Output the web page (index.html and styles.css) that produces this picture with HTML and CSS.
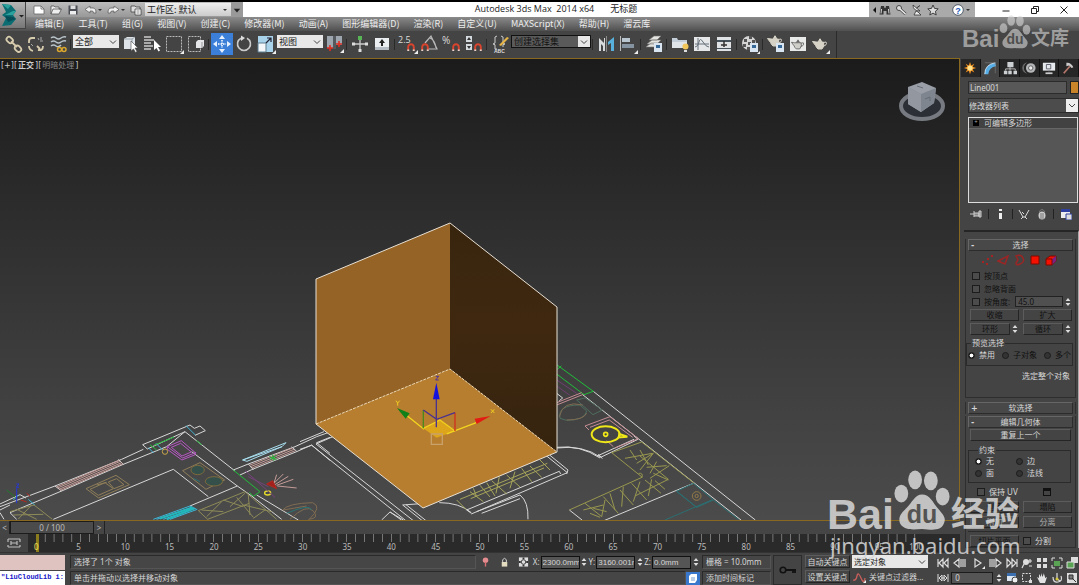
FILE: index.html
```html
<!DOCTYPE html>
<html lang="zh-CN">
<head>
<meta charset="utf-8">
<title>Autodesk 3ds Max 2014 x64 无标题</title>
<link rel="stylesheet" href="styles.css">
</head>
<body>
<svg class="defs" aria-hidden="true">
  <symbol id="chev" viewBox="0 0 8 8"><path d="M1 2.5l3 3 3-3" fill="none" stroke="#444" stroke-width="1"/></symbol>
  <symbol id="updown" viewBox="0 0 6 10"><path d="M3 1l2.4 3H.6zM3 9L.6 6h4.800z" fill="#ddd"/></symbol>
  <symbol id="magnet" viewBox="0 0 8 8"><path d="M1.200 7.500V4a2.800 2.800 0 0 1 5.600 0v3.500" fill="none" stroke="#d8442e" stroke-width="1.900"/><path d="M.3 6.500h1.900V8H.3zM5.800 6.500h1.900V8H5.800z" fill="#e8d8d0"/></symbol>
  <symbol id="corner" viewBox="0 0 4 4"><path d="M4 0v4H0z" fill="#eee"/></symbol>
  <symbol id="teapot" viewBox="0 0 16 12"><path d="M4 4h7.500q1.500 4-1.500 7H6Q4.500 10 3.500 7.500L.5 3.500 3 3.800z" /><path d="M6 3.300q2-1.800 4 0zM7.500 1h1v1.500h-1z"/><path d="M11.500 4.500q3.500-1.500 3 1t-3.500 2.700" fill="none" stroke-width="1"/></symbol>
  <symbol id="paw" viewBox="0 0 58 62"><ellipse cx="8" cy="24" rx="7" ry="9"/><ellipse cx="22" cy="10" rx="7" ry="9.500"/><ellipse cx="38" cy="11" rx="7" ry="9.500"/><ellipse cx="50" cy="27" rx="7" ry="9"/><path d="M29 25c8 0 11 8 16 14 6 7 9 10 6 16-3 7-11 6-22 5-11 1-18 1-22-5-3-7 1-11 6-16 6-6 9-14 16-14z"/></symbol>
</svg>

<header class="top">
  <button class="app" aria-label="应用程序"><svg viewBox="0 0 26 27" width="26" height="27"><path d="M2 2l9 1 5 6-3 4 3 4-5 6-9 1 4-8-4-3 4-3z" fill="#0b6d72"/><path d="M2 2l6 5 3-4zM5 13l8-4 3 0-3 4z" fill="#2ba29e"/><path d="M5 14l8 1 3 2-8 3z" fill="#064d58"/><path d="M19 13h5l-2.500 2.500z" fill="#222"/></svg></button>
  <div class="bars">
    <div class="title">
      <div class="quick">
        <button aria-label="新建"><svg viewBox="0 0 12 12"><path d="M1 2h7l3 3v5H1z" fill="#fff" stroke="#666" stroke-width=".8"/><path d="M8 2v3h3" fill="none" stroke="#666" stroke-width=".8"/></svg></button>
        <button aria-label="打开"><svg viewBox="0 0 12 12"><path d="M1 10V2h3l1 1h4v2h2.500L9 10z" fill="#eee" stroke="#555" stroke-width=".8"/><path d="M1 10l2-5h8" fill="none" stroke="#555" stroke-width=".8"/></svg></button>
        <button aria-label="保存"><svg viewBox="0 0 12 12"><path d="M1.500 1.500h9v9h-9z" fill="#4c4f55"/><path d="M3.500 1.500h5v3.500h-5z" fill="#ddd"/><path d="M3 7h6v3.500H3z" fill="#eee"/></svg></button>
        <button class="wide" aria-label="撤消"><svg viewBox="0 0 18 12"><path d="M1 5.500L6 2v2h3q3 0 3 5H9.500Q9.500 7 8 7H6v2z" fill="#eee" stroke="#555" stroke-width=".7"/><path d="M14 5h4l-2 2z" fill="#333"/></svg></button>
        <button class="wide" aria-label="重做"><svg viewBox="0 0 18 12"><path d="M12 5.500L7 2v2H4Q1 4 1 9h2.500Q3.500 7 5 7h2v2z" fill="#eee" stroke="#555" stroke-width=".7"/><path d="M14 5h4l-2 2z" fill="#333"/></svg></button>
        <button aria-label="项目文件夹"><svg viewBox="0 0 12 12"><path d="M1 2h4l1 1h4v5H1z" fill="#ddd" stroke="#444" stroke-width=".8"/><path d="M5 5h6v6H5z" fill="#fff" stroke="#444" stroke-width=".8"/><path d="M6.500 7h3M6.500 9h3" stroke="#555" stroke-width=".7"/></svg></button>
        <span class="combo work"><select aria-label="工作区"><option>工作区: 默认</option></select><svg viewBox="0 0 8 8"><path d="M2 3h4L4 5z" fill="#333"/></svg></span>
        <button class="more" aria-label="更多"><svg viewBox="0 0 10 12"><path d="M1 4.500h8L5 9z" fill="#222"/></svg></button>
      </div>
      <h1><span>Autodesk 3ds Max&nbsp; 2014 x64</span><span>无标题</span></h1>
      <div class="info">
        <svg class="tiny" viewBox="0 0 5 8"><path d="M4 1v6L1 4z" fill="#111"/></svg>
        <button aria-label="搜索"><svg viewBox="0 0 12 12"><path d="M2 2h3l.5 2h1L7 2h3l1.500 8.500h-4V7h-3v3.500h-4z" fill="#333"/><path d="M2.500 5L2 9.500M9.500 5l.5 4.500" stroke="#ddd"/></svg></button>
        <button aria-label="速博中心"><svg viewBox="0 0 12 12"><path d="M5 5l5.500 5" stroke="#444" stroke-width="3"/><circle cx="4" cy="4" r="2.500" fill="#ddd" stroke="#444"/><path d="M5 5l5.500 5" stroke="#eee" stroke-width="1.500"/></svg></button>
        <button aria-label="通讯中心"><svg viewBox="0 0 12 12"><path d="M2 1q0 6 7 6zM5 7l-2 4h7L7 8z" fill="#eee" stroke="#333" stroke-width=".8"/><path d="M5.500 4L9 1.500" stroke="#333"/></svg></button>
        <button aria-label="收藏夹"><svg viewBox="0 0 12 12"><path d="M6 1l1.500 3.400 3.700.4-2.800 2.500.8 3.700L6 9.100 2.800 11l.8-3.700L.8 4.800l3.700-.4z" fill="#ddd" stroke="#333" stroke-width=".9"/></svg></button>
        <button class="help" aria-label="帮助"><svg viewBox="0 0 20 12"><circle cx="8" cy="6" r="5.300" fill="#fff" stroke="#345" stroke-width=".8"/><text x="8" y="9.500" text-anchor="middle" font-size="9" font-weight="700" font-family="Liberation Sans" fill="#1d59b8">?</text><path d="M16 5h4l-2 2z" fill="#333"/></svg></button>
      </div>
      <div class="win">
        <button aria-label="最小化"><svg viewBox="0 0 10 10"><path d="M1.500 6h7" stroke="#222"/></svg></button>
        <button aria-label="还原"><svg viewBox="0 0 10 10"><path d="M1.500 3.500h5v5h-5zM3.500 3.500v-2h5v5h-2" fill="none" stroke="#222"/></svg></button>
        <button aria-label="关闭"><svg viewBox="0 0 10 10"><path d="M1.500 1.500l7 7M8.500 1.500l-7 7" stroke="#222"/></svg></button>
      </div>
    </div>
    <nav class="menu"><a href="#">编辑(E)</a><a href="#">工具(T)</a><a href="#">组(G)</a><a href="#">视图(V)</a><a href="#">创建(C)</a><a href="#">修改器(M)</a><a href="#">动画(A)</a><a href="#">图形编辑器(D)</a><a href="#">渲染(R)</a><a href="#">自定义(U)</a><a href="#">MAXScript(X)</a><a href="#">帮助(H)</a><a href="#">溜云库</a></nav>
  </div>
</header>

<div class="tools">
  <div class="toolbar">
    <button aria-label="选择并链接"><svg viewBox="0 0 20 20"><g fill="none" stroke="#d8ccae" stroke-width="1.800"><rect x="2" y="3" width="7" height="5" rx="2.500" transform="rotate(45 5 6)"/><rect x="11" y="12" width="7" height="5" rx="2.500" transform="rotate(45 14 14)"/><path d="M7 7.500l6 5.500"/></g></svg></button>
    <button aria-label="断开链接"><svg viewBox="0 0 20 20"><g fill="none" stroke="#d8ccae" stroke-width="1.800"><path d="M9 4H6Q3 4 3 7v2M3 12q0 4 4 5M12 16q5 1 5-4M11 12l3 3"/></g><path d="M12 4l1 2M15 3v3M17 7h-3M5 10l2 2" stroke="#aaa"/></svg></button>
    <button aria-label="绑定到空间扭曲"><svg viewBox="0 0 20 20"><path d="M3 4q2.500-2 5 0t5 0 5-1M3 8q2.500-2 5 0t5 0 5-1M3 12q2.500-2 5 0t5-1" fill="none" stroke="#b8c3ca" stroke-width="1.500"/><g fill="none" stroke="#dba72c" stroke-width="1.500"><circle cx="11.500" cy="15.500" r="2"/><circle cx="16" cy="15.500" r="2"/></g></svg></button>
    <i class="sep"></i>
    <span class="combo all"><select aria-label="选择过滤器"><option>全部</option></select><svg><use href="#chev"/></svg></span>
    <button aria-label="选择对象"><svg viewBox="0 0 20 20"><path d="M4 5l3-2h8v9l-3 3H4z" fill="#dde3e8"/><path d="M4 5h8v10M12 5l3-2" fill="none" stroke="#9aa4ac"/><path d="M11 7v10l2.500-2 2 3.500 1.500-1-2-3.500h3z" fill="#fff" stroke="#444" stroke-width=".6"/></svg></button>
    <button aria-label="按名称选择"><svg viewBox="0 0 20 20"><path d="M2 3h7M2 6h10M2 9h7M2 12h9M2 15h7" stroke="#ccc" stroke-width="1.300"/><path d="M12 6v10l2.500-2 2 3.500 1.500-1-2-3.500h3z" fill="#fff"/></svg></button>
    <button aria-label="矩形选择区域"><svg viewBox="0 0 20 20"><path d="M2.500 2.500h15v15h-15z" fill="none" stroke="#bbb" stroke-dasharray="2 1"/><use href="#corner" x="16" y="16" width="4" height="4"/></svg></button>
    <button aria-label="窗口/交叉"><svg viewBox="0 0 20 20"><path d="M2.500 2.500h12v15h-12z" fill="none" stroke="#bbb" stroke-dasharray="2 1"/><path d="M10 8l2-2h6v6l-2 2h-6z" fill="#e4e6e8"/><path d="M16 14V8" stroke="#999"/></svg></button>
    <i class="sep"></i>
    <button class="on" aria-label="选择并移动"><svg viewBox="0 0 20 20"><path d="M10 1l3 4H7zM10 19l3-4H7zM1 10l4-3v6zM19 10l-4-3v6z" fill="#e8f1ff"/><path d="M10 6v8M6 10h8" stroke="#fff" stroke-width="1.500" stroke-dasharray="1.500 1"/></svg></button>
    <button aria-label="选择并旋转"><svg viewBox="0 0 20 20"><path d="M7 4.200a6.500 6.500 0 1 0 6 0" fill="none" stroke="#ccc" stroke-width="1.600"/><path d="M7 1.500l4 2.500-4 3z" fill="#ddd"/></svg></button>
    <button aria-label="选择并缩放"><svg viewBox="0 0 20 20"><path d="M2 2h15v16H2z" fill="#a8d3ea"/><path d="M2 9h8v9H2z" fill="#f3f7fa" stroke="#5d7e91"/><path d="M10 9l5-5M11 4h4v4" fill="none" stroke="#223" stroke-width="1.200"/><use href="#corner" x="16" y="16" width="4" height="4"/></svg></button>
    <span class="combo all"><select aria-label="参考坐标系"><option>视图</option></select><svg><use href="#chev"/></svg></span>
    <button aria-label="使用轴点中心"><svg viewBox="0 0 20 20"><path d="M3 2h6v12H3zM12 2h6v9h-6z" fill="#9da5ae"/><path d="M9 2h3v13H9z" fill="#55585d"/><path d="M6 11v6M3 14h6M15 7v6M12 10h6" stroke="#e12d22" stroke-width="1.600"/><use href="#corner" x="16" y="15" width="4" height="4"/></svg></button>
    <i class="sep"></i>
    <button aria-label="选择并操纵"><svg viewBox="0 0 20 20"><path d="M10 3v14M3 10h14" stroke="#ccc" stroke-width="1.300"/><path d="M8 2h4v4H8z" fill="#58b556"/><path d="M2 8.500h3v3H2zM15 8.500h3v3h-3zM8.500 15h3v3h-3z" fill="#ddd"/></svg></button>
    <button aria-label="键盘快捷键覆盖"><svg viewBox="0 0 20 20"><path d="M3 4h14v12H3z" fill="#eceff2"/><path d="M3 13h14v3H3z" fill="#b5bcc3"/><path d="M10 5l3 4h-2v3H9V9H7z" fill="#222"/></svg></button>
    <i class="sep"></i>
    <button aria-label="捕捉开关"><svg viewBox="0 0 20 20"><text x="0" y="9" font-size="9" font-family="Open Sans" fill="#ddd">2.5</text><use href="#magnet" x="9" y="9" width="8" height="8"/><use href="#corner" x="16" y="16" width="4" height="4"/></svg></button>
    <button aria-label="角度捕捉"><svg viewBox="0 0 20 20"><path d="M5 9l6-7 6 13H8M10 4q5 2 6 10" fill="none" stroke="#bbb" stroke-width="1.200"/><use href="#magnet" x="1" y="9" width="8" height="8"/></svg></button>
    <button aria-label="百分比捕捉"><svg viewBox="0 0 20 20"><text x="0" y="10" font-size="10" font-family="Open Sans" fill="#ddd">%</text><use href="#magnet" x="10" y="9" width="8" height="8"/></svg></button>
    <button aria-label="微调器捕捉"><svg viewBox="0 0 20 20"><path d="M2 2h6v6H2zM2 10h6v6H2z" fill="#d5dade"/><path d="M5 3l2 3H3zM5 15l2-3H3z" fill="#333"/><use href="#magnet" x="10" y="9" width="8" height="8"/></svg></button>
    <i class="sep"></i>
    <button aria-label="编辑命名选择集"><svg viewBox="0 0 20 20"><path d="M7 2Q4 2 5 6t-2 4q3 0 2 3t2 2M11 2q3 0 2 4t2 4q-3 0-2 3" fill="none" stroke="#ccc"/><path d="M9 11l8-8 2 1-8 8z" fill="#e7b646"/><text x="4" y="19" font-size="5" font-weight="700" font-family="Liberation Sans" fill="#ddd">ABC</text></svg></button>
    <span class="combo named"><select aria-label="命名选择集"><option>创建选择集</option></select><svg><use href="#chev"/></svg></span>
    <i class="sep"></i>
    <button aria-label="镜像"><svg viewBox="0 0 20 20"><path d="M3 4l5 5V4h1v13H7v-5l-2-2v7H3z" fill="#d7dadd"/><path d="M10.500 2v16" stroke="#888"/><path d="M18 3v14h-3V9l-3 2V8z" fill="#58b0dd"/></svg></button>
    <button aria-label="对齐"><svg viewBox="0 0 20 20"><path d="M2.500 2v15" stroke="#bbb"/><path d="M4 4h8v4H4z" fill="#b9c5cf"/><path d="M4 10h12v4H4z" fill="#8693a0"/><use href="#corner" x="16" y="16" width="4" height="4"/></svg></button>
    <i class="sep"></i>
    <button aria-label="层管理器"><svg viewBox="0 0 20 20"><path d="M2 13l5-4h9l-4 4zM3 10l5-4h9l-4 4zM5 6l5-4h7l-4 4z" fill="#e3e3e0" stroke="#777" stroke-width=".6"/><path d="M10 9h8v9h-8z" fill="#d9e6f2"/><path d="M12 11h4v3h-4z" fill="#356797"/></svg></button>
    <i class="sep"></i>
    <button aria-label="石墨建模工具"><svg viewBox="0 0 20 20"><path d="M2 4h5l1 2h9v8H2z" fill="#c4ced8"/><path d="M2 8h15v6H2z" fill="#e0e5ea"/><circle cx="15.500" cy="12.500" r="3" fill="#f1c65a"/><path d="M14 16h3v2h-3z" fill="#ddd"/></svg></button>
    <button aria-label="曲线编辑器"><svg viewBox="0 0 20 20"><path d="M2 3h16v14H2z" fill="#e5e7e9"/><path d="M3 13q3 0 4-5t4 0 6 5M3 10h14M6 4v12" fill="none" stroke="#66717a"/></svg></button>
    <button aria-label="图解视图"><svg viewBox="0 0 20 20"><path d="M3 3h14v14H3z" fill="#e0e3e6"/><path d="M3 6h14v2H3zM3 14h14v1H3z" fill="#46525c"/><path d="M10 7v6M7 11h6" stroke="#333" stroke-width="1.500"/></svg></button>
    <i class="sep"></i>
    <button aria-label="材质编辑器"><svg viewBox="0 0 20 20"><circle cx="9" cy="9" r="7" fill="#d5d5d5"/><path d="M4 5h3v3H4zM9 2h3v3H9zM8 8h3v3H8zM3 10h3v3H3zM12 6h3v3h-3zM7 13h3v3H7z" fill="#555"/><path d="M10 9h8v9h-8z" fill="#d9e6f2"/><path d="M12 11h4v3h-4z" fill="#356797"/><use href="#corner" x="17" y="17" width="3" height="3"/></svg></button>
    <i class="sep"></i>
    <button aria-label="渲染设置"><svg viewBox="0 0 20 20"><use href="#teapot" x="1" y="1" width="16" height="12" fill="#d7d2c6" stroke="#d7d2c6"/><path d="M10 9h8v9h-8z" fill="#d9e6f2"/><path d="M12 11h4v3h-4z" fill="#356797"/></svg></button>
    <button aria-label="渲染帧窗口"><svg viewBox="0 0 20 20"><path d="M2 3h16v14H2z" fill="#e8eaea"/><use href="#teapot" x="3" y="5" width="14" height="11" fill="#cfcfca" stroke="#666"/></svg></button>
    <button aria-label="渲染产品"><svg viewBox="0 0 20 20"><use href="#teapot" x="2" y="4" width="16" height="12" fill="#d7d2c6" stroke="#d7d2c6"/><use href="#corner" x="16" y="16" width="4" height="4"/></svg></button>
  </div>
</div>

<main class="main">
  <section class="left">
    <div class="view">
      <svg class="scene" viewBox="0 59 959 461" preserveAspectRatio="xMinYMax slice" aria-label="视口">
        <g transform="translate(0 410) scale(.3333)" fill="none" stroke-width="3" stroke="#d8d8d8">
          <path d="M0 290L165 228 365 148 430 118M0 300L30 285M30 308L185 243 370 163 500 110 555 65M165 228l20 15M355 148l16 16M30 308l20 20M428 104L570 45l13 10 17-7 16 14-31 14M428 104l14 13 113-52 150 118M575 125l137 103 43 30 90 70M770 255l125 75M160 328l360-150 105 82M570 288l142-60M700 180l45-18 140-52 65-30 40-14M720 195l35-16 135-54 45-20 55 46M950 98l40-16M950 98l40 32M745 162l15 17M875 110l16 15M0 308l12 20M0 282l60-28 18 10"/>
          <path stroke="#c59c98" d="M169 231l188-80M173 234l188-80M177 238l188-80M181 241l188-80M748 166l130-52M752 170l130-52M756 174l130-52M820 222l30-30M825 224l40-25M830 226l50-18M832 228l58 6M822 220l8-26"/>
          <path stroke="#3fb6d8" d="M558 47l28 28M445 113l16 16M468 100l20 20M40 270l15-15M85 268l20 18M460 328l110-40M470 328l105-36M490 328l95-33M510 328l82-30M590 298l-20-10"/>
          <path stroke="#a9dff0" d="M728 150l130-52-12 12-105 44zM728 150l118-40"/>
          <path stroke="#21b8bd" stroke-width="6" d="M480 326l98-34M500 328l84-33"/>
          <path stroke="#20bd39" d="M450 104l20 16M462 106l60-25M590 92l15 12M700 180l80 65-20 14-12-12M808 140l22 8M810 150l20-14M818 134l4 18"/>
          <path stroke="#b556c2" d="M502 110l42-18 42 36-38 16zM514 112l28-12 32 26-28 12zM502 110v8l44 32 40-16v-8"/>
          <path stroke="#8f7d58" d="M258 236l90-40 40 28-92 40zM270 238l45-20 25 18-45 20zM325 216l25-10 22 18-30 12zM290 225l30 -8M548 182l52-24 74 52-56 28z"/>
          <g stroke="#7d6a3d" fill="#35504a"><ellipse cx="593" cy="180" rx="20" ry="14"/><ellipse cx="642" cy="214" rx="26" ry="14"/></g>
          <path stroke="#8e8b58" d="M30 305l72-20 55 43M50 298l60 30M95 285l-40 42M40 315l90-2M595 302l140-57 95 83M595 302l28 26 125-48M605 300l65 5M620 320l45-45M670 270l60 20M690 290l45-40M710 262l50 60M745 255l5 60M730 285l85 20M760 325l35-25"/>
          <path stroke="#806b51" d="M848 300q15-20 90-22 30 12-10 50M870 328q50-48 70-25t-15 25M850 300l70-12"/>
          <path stroke="#2a7374" d="M860 310q70-30 75-10M580 205l20 10"/>
          <path stroke="#b32820" fill="#a3201c" d="M800 222l18-10 12 24zM62 270l18 6M80 250l10 8"/>
          <circle cx="495" cy="125" r="8" stroke="#c9a54a"/><ellipse cx="803" cy="249" rx="9" ry="6" stroke="#e7de2b" stroke-width="4"/>
          <path stroke="#75427b" d="M735 182l90 80M745 200l60 30"/>
          <path stroke="#2436d8" d="M50 280v-45M49 222h8l-8 10h8"/><path stroke="#207a2a" d="M20 240l26 22"/>
        </g>
        <g transform="translate(300 210) scale(.3333)" fill="none" stroke-width="3" stroke="#d8d8d8">
          <path d="M0 695l72-30M0 718l35-12 285 228M48 702l60-26M48 702l292 230M308 885l70-5M308 885l60 48M318 884l60 48M245 930l25-24 34 24M270 906l40 24M418 878q60 0 96 30M500 900l278-116M514 912l288-124M500 900l14 10M530 905l130-50q26 20 24 73M545 910l115-44M740 738l62 50M750 736l54 44-4 12M778 784l4 8M770 712q70-8 130 32"/>
          <path stroke="#a7a55a" d="M470 870l28 28M480 868l262-108M510 845l40 30M520 835l10 25M540 826l30 35M560 818l25 40M575 812l45 40M598 800l-10 50M620 795l40 36M645 785l-15 50M665 775l30 40M690 768l35 34M720 750l30 30M512 866l220-92"/>
        </g>
        <g transform="translate(540 350) scale(.3333)" fill="none" stroke-width="3" stroke="#d8d8d8">
          <path d="M160 124l486 386M128 134l475 376M192 512l268-112M88 480l38 30M50 294q78-10 132 28l112-54-12-10M172 318l110-50M50 130l18 14-10 8M175 312l12 14"/>
          <path stroke="#20bd39" d="M50 44l110 80-28 10-82-62M52 58l12-10"/>
          <path stroke="#c58c94" d="M50 158l75-30M50 165l80-32M135 228l75-28 85 66-70 28M150 232l58-22 70 52M135 228l12 12M200 272l20 18"/>
          <path stroke="#6d3d70" d="M50 90l60 40M50 108l40 28"/>
          <path stroke="#4e6d5e" d="M60 205q-8-40 60-40l20 18q-5 28-60 28zM110 150l25-6 52 36-28 14z"/><path stroke="#806b51" d="M58 200q10-50 70-35M80 210q50 0 60-20"/>
          <ellipse cx="197" cy="253" rx="42" ry="24" stroke="#f0e718" stroke-width="6"/><circle cx="197" cy="253" r="6" stroke="#f0e718" stroke-width="5"/><path d="M238 252l24 8-26 2z" stroke="#f0e718" stroke-width="6"/>
          <path stroke="#99984f" d="M215 308l90-32 158 124M215 308l92 74M88 480l218-98q4-14-10-12M385 388l-85-70M255 325l82-15M270 300l20 30M300 300l25 45M290 340l50-30-40 50M320 352l60-5M350 335l-20 35M330 385l58-38M340 370l45 20M130 480l60-15M135 460l50 40 10-50M160 475l40 10M190 440l45 50M210 430l15 50M240 420l40 45M250 410l-5 60M275 400l45 50M300 395l-20 60M315 390l48 40M335 388l-10 50M345 392l30 26M385 388l-100 50M150 490l30 12"/>
          <path stroke="#2a6f72" d="M410 424l50-24 60 50-50 22zM410 424l60 48M520 450l75 58M375 510l140-60"/><circle cx="470" cy="438" r="13" stroke="#927846"/><circle cx="470" cy="438" r="5" stroke="#927846"/>
        </g>
        <defs><linearGradient id="dark" x1="0" y1="0" x2="0" y2="1"><stop offset="0" stop-color="#38250e"/><stop offset=".45" stop-color="#402810"/><stop offset="1" stop-color="#35240f"/></linearGradient></defs>
        <path d="M316 279l134-56v146l-134 55z" fill="#946325"/>
        <path d="M450 223l107 84v145l-107-83z" fill="url(#dark)"/>
        <path d="M316 424l134-55 107 83-134 56z" fill="#b77e2f"/>
        <path d="M316 279l134-56 107 84v145l-134 56-107-84z" fill="none" stroke="#e8e0d4"/>
        <path d="M316 424l134-55 107 83" fill="none" stroke="#f0d9b4" stroke-dasharray="3 1"/>
        <g transform="translate(300 210) scale(.3333)" fill="none" stroke-width="4">
          <path d="M370 655l50-25 45 33-55 20z" fill="#dca51c"/><path d="M370 655l50-25 45 33" stroke="#f0cf1f"/>
          <path d="M372 658l-60-48M440 672l95-36" stroke="#f3d51f"/><path d="M370 655v-55" stroke="#4a8a1d"/><path d="M465 663v-55" stroke="#cf321d"/><path d="M370 600l40 28 55-20M409 652v-90" stroke="#4a3190"/>
          <path d="M409 518l10 50h-20z" fill="#1512e0"/><path d="M291 594l38 16-12 16z" fill="#108018"/><path d="M572 618l-48 8 6 16z" fill="#e31b12"/>
          <path d="M394 672h33v31h-33z" stroke="#c9a16a"/>
          <path d="M288 572l5 7 6-7M293 579v8M573 598l10 11M583 598l-10 11" stroke="#f0cf1f" stroke-width="3"/><path d="M407 499h9l-9 11h9" stroke="#4931a0" stroke-width="3"/>
        </g>
        <g><ellipse cx="922" cy="106" rx="21" ry="13" fill="#2c3036" stroke="#777b81" stroke-width="4"/><path d="M908 87l14-5 14 6-2 15-13 9-13-8z" fill="#9a9fa7"/><path d="M908 87l13 7 15-6-2 15-13 9z" fill="#7f858e"/><path d="M908 87l13 7v18l-13-8z" fill="#9398a0"/><path d="M917 86l6 2M925 99l5-2v4" stroke="#666c75" fill="none"/></g>
      </svg>
      <div class="vlabel">[+][<b>正交</b>][<span>明暗处理</span>]</div>
    </div>
    <div class="slider"><button aria-label="上一帧">&lt;</button><button class="thumb">0 / 100</button><button aria-label="下一帧">&gt;</button></div>
    <div class="track">
      <button class="mini" aria-label="打开迷你曲线编辑器"><svg viewBox="0 0 14 12"><path d="M1 2h12M1 10h12M1 2v3M13 2v3M4 6h6M4 4v4M10 4v4M1 8v2M13 8v2" fill="none" stroke="#bbb" stroke-width="1.200"/></svg></button>
      <div class="ruler"><span class="cur">0</span><span>5</span><span>10</span><span>15</span><span>20</span><span>25</span><span>30</span><span>35</span><span>40</span><span>45</span><span>50</span><span>55</span><span>60</span><span>65</span><span>70</span><span>75</span><span>80</span><span>85</span><span>90</span><span>95</span><span class="last">100</span></div>
    </div>
  </section>

  <aside class="panel">
    <div class="tabs">
      <button aria-label="创建"><svg viewBox="0 0 16 16"><path d="M8 1l1.500 4L13 3l-2 3.500L15 8l-4 1.500 2 3.500-3.500-2L8 15l-1.500-4L3 13l2-3.500L1 8l4-1.500L3 3l3.500 2z" fill="#e98b1e"/><circle cx="8" cy="8" r="3" fill="#ffe28c"/></svg></button>
      <button class="on" aria-label="修改"><svg viewBox="0 0 16 16"><path d="M2 15Q2 4 14 2l1 4Q7 7 6 15z" fill="#57aee6"/><path d="M2 15Q2 4 14 2" stroke="#d6ecfa" fill="none"/><path d="M2 2h12v12" fill="none" stroke="#888" stroke-width=".6"/></svg></button>
      <button aria-label="层次"><svg viewBox="0 0 16 16"><path d="M5 1h7v6H5zM1 11h4v4H1zM6 11h4v4H6zM12 11h4v4h-4z" fill="#ccd0d3"/><path d="M8 7v4M3 11V9h11v2" fill="none" stroke="#ccc"/></svg></button>
      <button aria-label="运动"><svg viewBox="0 0 16 16"><path d="M5 2a7 7 0 0 0 0 12M3 3a7 7 0 0 0 0 10" fill="none" stroke="#777"/><circle cx="10" cy="8" r="5.500" fill="#b4b6b8"/><circle cx="10" cy="8" r="2.500" fill="#eee" stroke="#555"/></svg></button>
      <button aria-label="显示"><svg viewBox="0 0 16 16"><path d="M1 2h14v9H1z" fill="#e6e9eb"/><path d="M5 4h5v5H5zM5 14h6M8 11v3" fill="none" stroke="#556" /><path d="M4 13h8v2H4z" fill="#ccc"/></svg></button>
      <button aria-label="实用程序"><svg viewBox="0 0 16 16"><path d="M5 2q5-1 8 5l-2 1-3-3-3 1z" fill="#c9c9c9"/><path d="M9 6l-7 8" stroke="#b4776a" stroke-width="2"/></svg></button>
    </div>
    <div class="namerow"><input aria-label="名称" value="Line001"><button class="swatch" aria-label="颜色"></button></div>
    <span class="combo mods"><select aria-label="修改器列表"><option>修改器列表</option></select><svg><use href="#chev"/></svg></span>
    <div class="stack"><div class="item"><span>+</span>可编辑多边形</div></div>
    <div class="stacktools">
      <button aria-label="锁定堆栈"><svg viewBox="0 0 12 12"><path d="M0 6h4M4 3v6M4 5h5v3H4M9 3v6h2V3z" fill="#888" stroke="#ccc"/></svg></button><i></i>
      <button aria-label="显示最终结果"><svg viewBox="0 0 12 12"><path d="M5 1h3v2H5zM5 5h3v6H5z" fill="#eee"/></svg></button><i></i>
      <button aria-label="使唯一"><svg viewBox="0 0 12 12"><path d="M1 2l4 7h2l4-7M5 9l-2 2M7 9l2 2M4 4l2 2" fill="none" stroke="#ddd"/></svg></button>
      <button aria-label="移除修改器"><svg viewBox="0 0 12 12"><ellipse cx="6" cy="7.500" rx="3.500" ry="4" fill="#ccc"/><path d="M3 4q3-5 6 0M5 5v6M7 5v6" fill="none" stroke="#777"/></svg></button><i></i>
      <button aria-label="配置修改器集"><svg viewBox="0 0 12 12"><path d="M1 1h9v9H1z" fill="#eee"/><path d="M1 1h9v3H1z" fill="#3040a0"/><path d="M6 6h6v6H6z" fill="#ddd" stroke="#3040a0"/></svg></button>
    </div>
    <div class="scroll">
      <section class="roll first">
        <button class="head"><i>-</i>选择</button>
        <div class="subs">
          <button aria-label="顶点"><svg viewBox="0 0 12 12"><path d="M1 7h2v2H1zM5 9h2v2H5zM6 4h2v2H6zM10 1h2v2h-2z" fill="#a52323"/></svg></button>
          <button aria-label="边"><svg viewBox="0 0 12 12"><path d="M1 7l10-5-3 8z" fill="none" stroke="#9c2525" stroke-width="1.500"/></svg></button>
          <button aria-label="边界"><svg viewBox="0 0 12 12"><path d="M3 2q5-2 7 2t-3 6q-4 2-4-1l2-3z" fill="none" stroke="#9c2525" stroke-width="1.500"/></svg></button>
          <button aria-label="多边形"><svg viewBox="0 0 12 12"><path d="M2 2h8v8H2z" fill="#f51000" stroke="#7a0a00"/></svg></button>
          <button aria-label="元素"><svg viewBox="0 0 12 12"><path d="M1 5l4-3h6v5l-4 4H1z" fill="#f51000" stroke="#7a0a00"/><path d="M7 5l4-3v5l-4 4z" fill="#7a2382"/><path d="M1 5h6v6" fill="none" stroke="#7a0a00"/></svg></button>
        </div>
        <label class="row dim"><input type="checkbox">按顶点</label>
        <label class="row dim"><input type="checkbox">忽略背面</label>
        <div class="row dim"><label><input type="checkbox">按角度:</label><input class="num" aria-label="角度" value="45.0"><button class="spin" aria-label="微调"><svg><use href="#updown"/></svg></button></div>
        <div class="two dim"><button class="btn">收缩</button><button class="btn">扩大</button></div>
        <div class="two dim"><span><button class="btn">环形</button><button class="spin" aria-label="微调环形"><svg><use href="#updown"/></svg></button></span><span><button class="btn">循环</button><button class="spin" aria-label="微调循环"><svg><use href="#updown"/></svg></button></span></div>
        <fieldset class="preview"><legend>预览选择</legend><label><input type="radio" name="p" checked>禁用</label><label class="dim"><input type="radio" name="p">子对象</label><label class="dim"><input type="radio" name="p">多个</label></fieldset>
        <p class="whole">选定整个对象</p>
      </section>
      <section class="roll closed"><button class="head"><i>+</i>软选择</button></section>
      <section class="roll">
        <button class="head"><i>-</i>编辑几何体</button>
        <button class="btn repeat">重复上一个</button>
        <fieldset class="cons"><legend>约束</legend><label><input type="radio" name="c" checked>无</label><label><input type="radio" name="c">边</label><label><input type="radio" name="c">面</label><label><input type="radio" name="c">法线</label></fieldset>
        <div class="keep"><label><input type="checkbox">保持 UV</label><button class="box" aria-label="设置"></button></div>
        <div class="two geo dark"><button class="btn">创建</button><button class="btn">塌陷</button></div>
        <div class="two geo"><button class="btn">附加</button><button class="btn">分离</button></div>
        <div class="two geo cut"><button class="btn">切片平面</button><label><input type="checkbox">分割</label></div>
      </section>
    </div>
  </aside>
</main>

<footer class="status">
  <div class="script"><div></div><div>"LiuCloudLib i:</div></div>
  <div class="lines">
    <div class="line">
      <div class="field grow">选择了 1个 对象</div>
      <button class="ic" aria-label="隔离"><svg viewBox="0 0 12 12"><circle cx="6" cy="4" r="3" fill="#e58c90"/><path d="M6 6v5" stroke="#d86d72" stroke-width="1.500"/></svg></button>
      <button class="ic" aria-label="锁定"><svg viewBox="0 0 12 12"><path d="M4 6V3.500q2-3 4 0V6" fill="none" stroke="#ddd"/><path d="M3 6h6v5H3z" fill="#e4dcc0"/></svg></button>
      <button class="ic" aria-label="坐标模式"><svg viewBox="0 0 12 12"><path d="M1 1h10v10H1z" fill="#ddd"/><circle cx="6" cy="6" r="2.500" fill="none" stroke="#333"/><path d="M6 1v2M6 9v2M1 6h2M9 6h2" stroke="#333" stroke-width="2"/></svg></button>
      <label class="coord">X:<input value="2300.0mm"></label><button class="spin" aria-label="微调X"><svg><use href="#updown"/></svg></button>
      <label class="coord">Y:<input value="3160.001m"></label><button class="spin" aria-label="微调Y"><svg><use href="#updown"/></svg></button>
      <label class="coord">Z:<input value="0.0mm"></label><button class="spin" aria-label="微调Z"><svg><use href="#updown"/></svg></button>
      <div class="field grid">栅格 = 10.0mm</div>
    </div>
    <div class="line">
      <div class="field grow">单击并拖动以选择并移动对象</div>
      <button class="tag" aria-label="自适应降级"><svg viewBox="0 0 14 13"><path d="M3 4l2-2h6v6l-2 3H3z" fill="#fff"/><path d="M5 5h4v4H5z" fill="#b9cfe8"/></svg></button>
      <div class="field grid">添加时间标记</div>
    </div>
  </div>
  <button class="key" aria-label="设置关键点"><svg viewBox="0 0 18 10" width="18" height="10"><circle cx="4" cy="5" r="2.800" fill="none" stroke="#111" stroke-width="1.600"/><path d="M7 5h10M14 5v3M16 5v3" stroke="#111" stroke-width="1.800"/></svg></button>
  <div class="keys">
    <button class="btn">自动关键点</button><span class="combo"><select aria-label="选择集"><option>选定对象</option></select><svg><use href="#chev"/></svg></span>
    <button class="btn">设置关键点</button><button class="filter"><svg viewBox="0 0 14 12"><path d="M1 9q3 1 4-4t4 2 4 0" fill="none" stroke="#c9605c" stroke-width="1.300"/><use href="#corner" x="11" y="9" width="3" height="3"/></svg>关键点过滤器...</button>
  </div>
  <div class="play">
    <div>
      <button aria-label="转至开头"><svg viewBox="0 0 14 12"><path d="M2 2v8M7 2L3 6l4 4zM12 2L8 6l4 4z" fill="none" stroke="#ddd" stroke-width="1.200"/></svg></button>
      <button aria-label="上一帧"><svg viewBox="0 0 14 12"><path d="M6 2L1 6l5 4zM8 2v8M10 2v8M12 2v8" fill="none" stroke="#ddd" stroke-width="1.200"/></svg></button>
      <button aria-label="播放"><svg viewBox="0 0 14 12"><path d="M4 2l6 4-6 4z" fill="none" stroke="#ddd" stroke-width="1.200"/><use href="#corner" x="11" y="9" width="3" height="3"/></svg></button>
      <button aria-label="下一帧"><svg viewBox="0 0 14 12"><path d="M8 2l5 4-5 4zM6 2v8M4 2v8M2 2v8" fill="none" stroke="#ddd" stroke-width="1.200"/></svg></button>
      <button aria-label="转至结尾"><svg viewBox="0 0 14 12"><path d="M12 2v8M7 2l4 4-4 4zM2 2l4 4-4 4z" fill="none" stroke="#ddd" stroke-width="1.200"/></svg></button>
    </div>
    <div>
      <button aria-label="关键点模式"><svg viewBox="0 0 14 12"><path d="M2 2v8M12 2v8M6 3L3 6l3 3zM8 3l3 3-3 3zM5 6h4" fill="none" stroke="#ddd"/></svg></button>
      <input aria-label="当前帧" value="0"><button class="spin" aria-label="微调帧"><svg><use href="#updown"/></svg></button>
      <button aria-label="时间配置"><svg viewBox="0 0 14 12"><path d="M2 1h9v8H2z" fill="#dde7f2"/><path d="M2 1h9v3H2z" fill="#3b6fb0"/><circle cx="10" cy="8" r="3" fill="#eee" stroke="#444"/></svg></button>
    </div>
  </div>
  <div class="navs">
    <button aria-label="缩放"><svg viewBox="0 0 12 12"><circle cx="5" cy="5" r="3" fill="#ddd"/><path d="M3 7l-2 4M9 2v4M7 4h4M8 9h3" stroke="#ddd" stroke-width="1.200"/></svg></button>
    <button aria-label="缩放所有视图"><svg viewBox="0 0 12 12"><path d="M1 1h4v4H1zM7 1h4v4H7zM1 7h4v4H1zM7 7h4v4H7z" fill="#ddd"/></svg></button>
    <button aria-label="最大化显示"><svg viewBox="0 0 12 12"><path d="M1 4V1h3M8 1h3v3M11 8v3H8M4 11H1V8" fill="none" stroke="#ddd"/><path d="M3 4h6v5H3z" fill="#5aa354"/></svg></button>
    <button aria-label="所有视图最大化"><svg viewBox="0 0 12 12"><path d="M5 0h7v6H5z" fill="#ddd"/><path d="M1 5h7v6H1z" fill="#5aa354" stroke="#ddd"/></svg></button>
    <button aria-label="缩放区域"><svg viewBox="0 0 12 12"><path d="M1.500 1.500h8v8h-8z" fill="none" stroke="#ddd" stroke-dasharray="2 1.200"/><path d="M8 8h3v3H8z" fill="#ddd"/></svg></button>
    <button aria-label="平移视图"><svg viewBox="0 0 12 12"><path d="M3 6L1 5l3 6h5l2-6-2 1V2L8 5V1L6.500 5 5 1v4L3 2z" fill="#e3e3e3"/></svg></button>
    <button aria-label="环绕"><svg viewBox="0 0 12 12"><path d="M2 5q0 6 5 5t3-6M6 1v6l3 2" fill="none" stroke="#ddd" stroke-width="1.200"/><circle cx="6" cy="7" r="1.500" fill="#d5c63a"/></svg></button>
    <button aria-label="最大化视口"><svg viewBox="0 0 12 12"><path d="M1 1h10v10H1z" fill="#ddd"/><path d="M3 3h4v4H3zM6 6l4 4" stroke="#333" fill="#777"/></svg></button>
  </div>
</footer>

<div class="mark small" aria-hidden="true"><svg viewBox="0 0 108 36" width="108" height="36"><text x="0" y="32" font-family="Liberation Sans" font-weight="700" font-size="24">Bai</text><use href="#paw" x="37" y="0" width="32" height="34"/><text class="du" x="53" y="29" text-anchor="middle" font-family="Liberation Sans" font-weight="700" font-size="14">du</text><text x="69" y="30" font-family="Noto Sans CJK SC" font-weight="700" font-size="19">文库</text></svg></div>
<div class="mark big" aria-hidden="true"><svg viewBox="0 0 192 94" width="192" height="94"><text x="-2" y="59" font-family="Liberation Sans" font-weight="700" font-size="43">Bai</text><use href="#paw" x="64" y="0" width="58" height="61"/><text class="du" x="93" y="53" text-anchor="middle" font-family="Liberation Sans" font-weight="700" font-size="25">du</text><text x="122" y="56" font-family="Noto Sans CJK SC" font-weight="700" font-size="34">经验</text><text x="1" y="84" font-family="Noto Sans" font-size="22">jingyan.baidu.com</text></svg></div>
</body>
</html>
```

FILE: styles.css
```css
* { box-sizing: border-box; }
body {
  margin: 0;
  height: 100vh;
  display: flex;
  flex-direction: column;
  overflow: hidden;
  position: relative;
  background: #444;
  border-top: 2px solid #000;
  color: #d6d6d6;
  font: 8px/12px "Noto Sans", "Noto Sans CJK SC", sans-serif;
}
button, input, select { font: inherit; color: inherit; margin: 0; padding: 0; border: 0; background: none; border-radius: 0; min-width: 0; }
button { display: flex; align-items: center; justify-content: center; white-space: nowrap; }
select { appearance: none; }
input { width: 100%; }
svg { display: block; flex: none; }
.defs { position: absolute; width: 0; height: 0; }

/* title and menus */
.top { display: flex; flex: none; height: 29px; background: linear-gradient(#8e8e8e 50%, #868686 55%, #505050); }
.app { width: 26px; height: 27px; background: linear-gradient(#b5b5b5, #777); border-right: 1px solid #444; border-bottom: 1px solid #444; }
.bars { flex: 1; min-width: 0; }
.title { display: flex; height: 15px; background: #fff; color: #222; font-size: 9px; }
.quick { display: flex; align-items: center; background: linear-gradient(#bcbcbc, #999); padding-left: 4px; }
.quick button { width: 17px; }
.quick button.wide { width: 23px; }
.quick button svg, .info svg { height: 12px; }
.quick button.more { width: 12px; background: #999; height: 15px; }
.quick .more svg { width: 8px; }
.combo.work { width: 86px; margin-left: 1px; background: linear-gradient(#eee, #ccc); }
.title h1 { flex: 1; margin: 0; display: flex; justify-content: center; gap: 16px; font: 9px/14px "Open Sans", "Noto Sans CJK SC", sans-serif; white-space: nowrap; }
.info { display: flex; align-items: center; background: #aaa; width: 106px; padding-left: 3px; }
.info button { width: 16px; }
.info .tiny { width: 5px; height: 8px; }
.info .help { width: 26px; margin-left: 6px; }
.win { display: flex; width: 104px; padding-left: 16px; }
.win button { width: 31px; }
.win svg { width: 10px; height: 10px; }
.menu { display: flex; gap: 14px; padding-left: 9px; font: 9px/14px "Noto Sans CJK SC", sans-serif; }
.menu a { color: #eee; text-decoration: none; white-space: nowrap; }

/* main toolbar */
.tools { flex: none; display: flex; height: 27px; background: #444; }
.toolbar { display: flex; align-items: center; padding: 0 5px 1px 3px; border-right: 1px solid #2b2b2b; }
.toolbar button { width: 22px; height: 22px; }
.toolbar button svg { width: 20px; height: 20px; }
.toolbar .on { background: #3b7fd9; }
.sep { width: 4px; height: 11px; background: linear-gradient(90deg, transparent 1px, #2a2a2a 1px 2px, transparent 2px); }
.combo { display: flex; align-items: center; background: #e8e8e8; color: #222; height: 13px; }
.combo select { flex: 1; padding-left: 2px; height: 100%; font: 9px/11px "Noto Sans CJK SC", sans-serif; }
.combo svg { width: 8px; height: 8px; margin: 0 2px; }
.combo.all { width: 46px; align-self: flex-start; margin-top: 4px; }
.combo.named { width: 80px; align-self: flex-start; margin-top: 4px; border: 1px solid #111; }
.combo.named select { background: #5a5a5a; color: #111; }

/* work area */
.main { flex: 1; min-height: 0; display: flex; }
.left { flex: 1; min-width: 0; display: flex; flex-direction: column; }
.view { flex: 1; min-height: 0; position: relative; overflow: hidden; border: 1px solid #88691f; border-left: 0; background: linear-gradient(#1b1b1b, #2c2c2c 32%, #404040 72%, #4b4b4b); }
.scene { position: absolute; inset: 0; width: 100%; height: 100%; }
.vlabel { position: relative; padding: 1px; color: #ccc; font: 8px/12px "DejaVu Sans", "Noto Sans CJK SC", sans-serif; }
.vlabel b { margin: 0 1px; }
.vlabel span { margin: 0 1px; color: #888; }
.slider { flex: none; display: flex; height: 13px; background: #454545; }
.slider button { width: 10px; color: #bbb; border-right: 1px solid #222; }
.slider .thumb { width: 84px; border: 1px solid #1c1c1c; background: #4b4b4b; }
.slider button:last-child { width: 11px; }
.track { flex: none; display: flex; height: 18px; background: #2a2a2a; padding-right: 37px; }
.mini { width: 28px; margin-right: 8px; background: #444; }
.mini svg { width: 14px; height: 12px; }
.ruler { flex: 1; display: grid; grid-template-columns: repeat(20, 1fr) 0; }
.ruler span { background: linear-gradient(90deg, #777 1px, transparent 1px) 0 0 / 20% 8px repeat-x; padding-top: 7px; line-height: 12px; display: flex; }
.ruler span::before { content: ""; width: 16px; margin-left: -8px; }
.ruler span { text-indent: -12px; color: #bbb; }
.ruler .cur { text-indent: -10px; color: #f2e35c; background: linear-gradient(#8b7d1d, #8b7d1d) 0 0 / 3px 100% no-repeat, linear-gradient(90deg, #777 1px, transparent 1px) 0 0 / 20% 8px repeat-x; }
.ruler .last { background: none; }

/* command panel */
.panel { flex: none; width: 119px; padding: 1px 0 4px 1px; display: flex; flex-direction: column; overflow: hidden; }
.tabs { display: flex; height: 18px; background: #262626; }
.tabs button { flex: 1; border-right: 1px solid #111; }
.tabs .on { background: #444; }
.tabs svg { width: 14px; height: 14px; }
.namerow { display: flex; gap: 3px; margin: 4px 0 4px 7px; height: 13px; }
.namerow input { background: #585858; border: 1px solid #2c2c2c; padding-left: 1px; }
.swatch { flex: none; width: 9px; background: #c98328; border: 1px solid #222; }
.combo.mods { flex: none; margin-left: 7px; height: 15px; background: #4c4c4c; border: 1px solid #2c2c2c; color: #ddd; }
.combo.mods select { font-size: 8px; padding-left: 0; }
.combo.mods svg { width: 12px; height: 13px; margin: 0; padding: 2px; background: #eee; }
.stack { flex: none; height: 86px; margin: 4px 1px 0 7px; border: 1px solid #ddd; background: #565656; }
.item { display: flex; height: 11px; line-height: 10px; background: #424242; border-bottom: 1px solid #666; padding-left: 4px; gap: 5px; }
.item span { width: 6px; height: 6px; margin-top: 2px; background: #000; color: #aaa; font-size: 6px; line-height: 5px; text-align: center; }
.stacktools { flex: none; display: flex; align-items: center; justify-content: space-between; height: 20px; margin: 1px 7px 6px 9px; }
.stacktools svg { width: 12px; height: 12px; }
.stacktools i { width: 1px; height: 10px; background: #222; }
.scroll { flex: 1; min-height: 0; overflow: hidden; margin-left: 3px; padding: 7px 1px 0 0; border-top: 2px solid #252525; border-right: 1px solid #aaa; }
.roll { position: relative; border: 1px solid #2e2e2e; border-top: 0; margin: 0 1px 4px; padding: 0 2px; }
.roll.first { height: 159px; }
.roll.closed { border-bottom: 0; margin-bottom: 2px; }
.head { position: relative; width: 100%; height: 12px; border: 1px solid #666; border-color: #666 #2c2c2c #2c2c2c #666; background: #484848; }
.head i { position: absolute; left: 2px; font: 700 8px/9px "DejaVu Sans", sans-serif; }
.dim { color: #111; }
.subs { display: flex; justify-content: center; gap: 4px; height: 18px; padding-right: 4px; }
.subs svg { width: 12px; height: 12px; }
.row { display: flex; align-items: center; height: 13px; padding-left: 4px; }
.row label { display: flex; align-items: center; flex: none; }
.row .num { height: 11px; margin-left: 5px; width: 48px; background: #505050; border: 1px solid #222; padding-left: 2px; }
input[type="checkbox"], input[type="radio"] { appearance: none; flex: none; width: 8px; height: 8px; margin: 0 4px 0 0; border: 1px solid #1c1c1c; background: #4c4c4c; }
input[type="radio"] { width: 7px; height: 7px; border-radius: 50%; background: #333; }
input[type="radio"]:checked { background: radial-gradient(#fff 50%, #222 60%); }
.spin { flex: none; width: 9px; height: 11px; }
.spin svg { width: 6px; height: 10px; }
.btn { border: 1px solid; border-color: #5c5c5c #252525 #252525 #5c5c5c; background: #444; height: 12px; }
.two { display: grid; grid-template-columns: 1fr 1fr; gap: 4px; height: 14px; padding: 1px 1px 0 2px; }
.two span { display: flex; }
.two .btn { flex: 1; }
fieldset { margin: 0; min-width: 0; border: 1px solid #2b2b2b; }
fieldset label { display: flex; align-items: center; white-space: nowrap; }
legend { line-height: 10px; padding: 0 1px; margin-left: 3px; }
.preview { display: flex; justify-content: space-between; height: 28px; margin: 2px 0 0 -2px; padding: 1px 1px 4px; }
.whole { margin: 4px 3px; text-align: right; }
.repeat { width: calc(100% - 4px); margin: 1px 2px 4px; }
.cons { display: grid; grid-template-columns: 41px 1fr; height: 38px; margin: 0 2px 0 0; padding: 0 0 3px 6px; }
.keep { display: flex; justify-content: space-between; height: 15px; padding: 2px 22px 0 9px; align-items: center; }
.keep label, .cut label { display: flex; align-items: center; }
.box { width: 8px; height: 8px; border: 1px solid #111; border-top-width: 3px; }
.geo { height: 15px; padding-top: 3px; }
.geo .btn { color: #aaa; }
.geo.dark .btn, .geo.cut .btn { color: #111; }
.cut { height: 16px; border-top: 1px solid #2b2b2b; margin-top: 3px; }

/* status bar */
.status { flex: none; display: flex; height: 33px; padding-top: 2px; background: #444; border-top: 1px solid #333; }
.script { width: 65px; display: grid; grid-template-rows: 15px 1fr; gap: 1px; font: 7px/13px "Liberation Mono", monospace; color: #1616c8; font-weight: 700; }
.script div { background: #dfc3c1; padding-left: 3px; overflow: hidden; white-space: nowrap; }
.script div:last-child { background: #fff; padding-left: 1px; }
.lines { flex: 1; min-width: 0; padding-left: 5px; display: grid; grid-template-rows: 1fr 1fr; gap: 2px; }
.line { display: flex; min-width: 0; align-items: center; }
.field { height: 14px; line-height: 12px; border: 1px solid #2a2a2a; border-right-color: #555; border-bottom-color: #555; padding-left: 3px; background: #464646; white-space: nowrap; }
.grow { flex: 1; min-width: 0; }
.grid { width: 69px; margin-left: 2px; }
.ic { width: 19px; }
.ic svg { width: 11px; height: 12px; }
.coord { display: flex; align-items: center; }
.coord input { width: 39px; height: 13px; margin-left: 1px; padding-left: 1px; border: 1px solid #111; background: #555; font-family: "Liberation Sans", sans-serif; }
.tag { width: 14px; height: 13px; background: #3877cc; }
.tag svg { width: 14px; height: 13px; }
.key { width: 29px; margin: 0 3px 0 2px; border: 1px solid #2c2c2c; }
.keys { flex: none; display: grid; grid-template-columns: 45px 76px; grid-template-rows: 13px 13px; gap: 2px; align-content: start; width: 123px; }
.keys .btn { height: 13px; }
.keys .combo select { font-size: 8px; width: 60px; }
.filter { justify-content: flex-start; gap: 3px; }
.filter svg { width: 14px; height: 12px; }
.play { flex: none; width: 83px; margin-left: 8px; }
.play > div { display: flex; align-items: center; justify-content: space-between; height: 15px; }
.play svg { width: 14px; height: 12px; }
.play input { width: 42px; height: 12px; border: 1px solid #1c1c1c; background: #555; padding-left: 3px; }
.play .spin svg { width: 6px; height: 10px; }
.navs { flex: none; display: grid; grid-template-columns: repeat(4, 1fr); grid-template-rows: 15px 15px; width: 60px; }
.navs svg { width: 12px; height: 12px; }

/* watermarks */
.mark { position: absolute; pointer-events: none; fill: #d8d8d8; opacity: .85; }
.mark.small { top: 13px; right: 9px; opacity: .6; }
.mark.big { right: 58px; bottom: 21px; }
.mark .du { fill: #555; }
```
